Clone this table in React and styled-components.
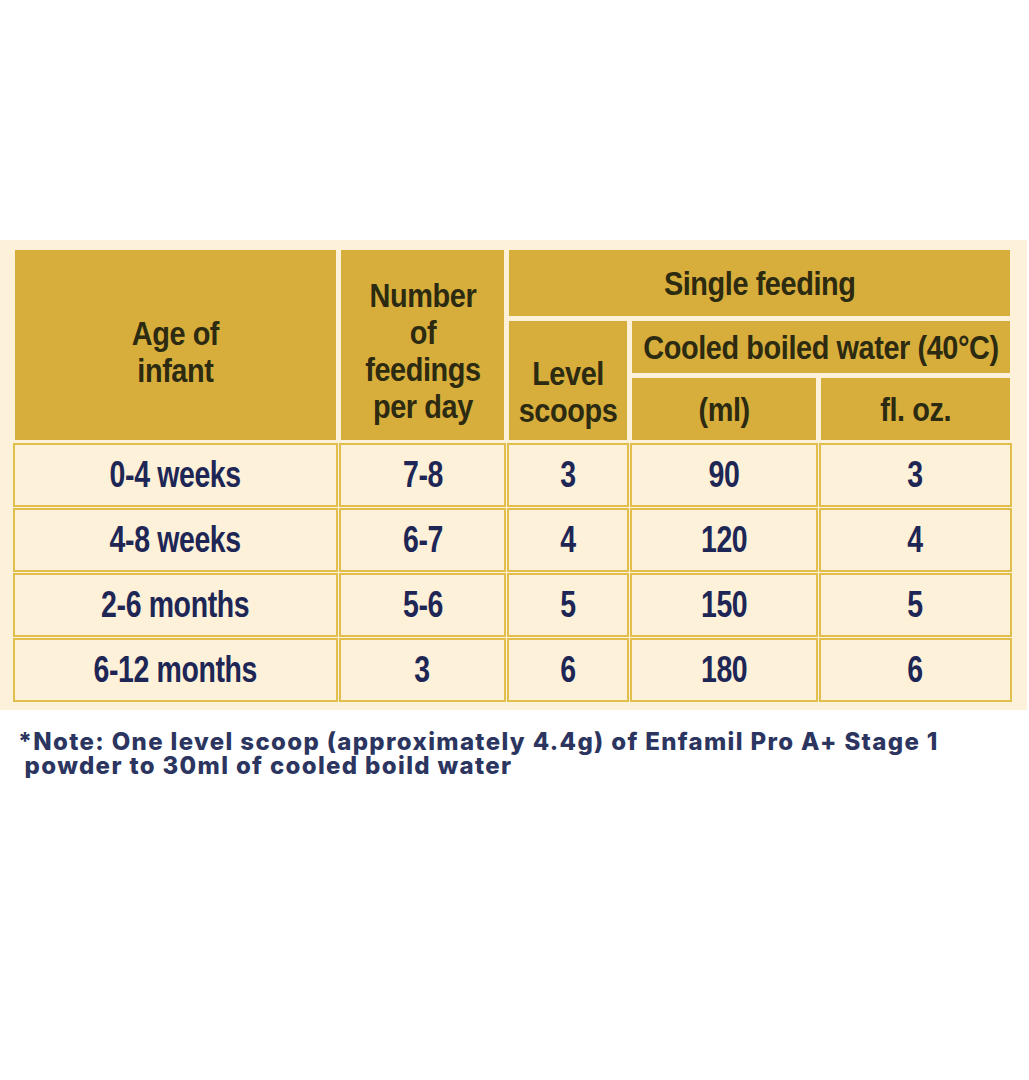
import React from "react";
import styled, { createGlobalStyle } from "styled-components";

const Global = createGlobalStyle`
  html, body { margin: 0; padding: 0; background: #ffffff; }
  body { width: 1029px; }
`;

const GOLD = "#d7ae3b";
const LINE = "#e2be4c";
const CREAM = "#fdf2d9";

const Page = styled.div`
  padding-top: 240px;
  width: 1029px;
`;

const Panel = styled.div`
  width: 1027px;
  box-sizing: border-box;
  background: ${CREAM};
  padding: 10px 17px 10px 15px;
`;

const Grid = styled.div`
  display: grid;
  grid-template-columns: 321px 163px 118px 184px 1fr;
  grid-template-rows: 66px 52px 62px repeat(4, 60px);
  gap: 5px;
  font-family: "Liberation Sans", Arial, sans-serif;
  font-weight: 700;
`;

const Head = styled.div`
  background: ${GOLD};
  color: #2c2a10;
  font-size: 34px;
  line-height: 37px;
  display: flex;
  align-items: center;
  justify-content: center;
  text-align: center;
  padding-top: ${(p) => p.$pt || 0}px;
  grid-column: ${(p) => p.$col};
  grid-row: ${(p) => p.$row};
`;

const Cell = styled.div`
  background: ${CREAM};
  box-shadow: 0 0 0 2px ${LINE};
  color: #1e2656;
  font-size: 37px;
  display: flex;
  align-items: center;
  justify-content: center;
`;

const Narrow = styled.span`
  display: inline-block;
  white-space: nowrap;
  transform: scaleX(${(p) => p.$sx || 0.85});
  letter-spacing: -0.5px;
`;

const Note = styled.p`
  margin: 20px 0 0 18px;
  font-family: "Inter", "Noto Sans", sans-serif;
  font-weight: 800;
  font-size: 24px;
  line-height: 24px;
  letter-spacing: 1.35px;
  color: #2b3560;
  white-space: pre;
`;

const rows = [
  ["0-4 weeks", "7-8", "3", "90", "3"],
  ["4-8 weeks", "6-7", "4", "120", "4"],
  ["2-6 months", "5-6", "5", "150", "5"],
  ["6-12 months", "3", "6", "180", "6"],
];

export default function App() {
  return (
    <Page>
      <Global />
      <Panel>
        <Grid>
          <Head $col="1" $row="1 / 4" $pt={14}><Narrow>Age of<br />infant</Narrow></Head>
          <Head $col="2" $row="1 / 4" $pt={12}><Narrow>Number<br />of<br />feedings<br />per day</Narrow></Head>
          <Head $col="3 / 6" $row="1"><Narrow>Single feeding</Narrow></Head>
          <Head $col="3" $row="2 / 4" $pt={22}><Narrow>Level<br />scoops</Narrow></Head>
          <Head $col="4 / 6" $row="2"><Narrow>Cooled boiled water (40°C)</Narrow></Head>
          <Head $col="4" $row="3"><Narrow>(ml)</Narrow></Head>
          <Head $col="5" $row="3"><Narrow>fl. oz.</Narrow></Head>
          {rows.map((r, i) =>
            r.map((v, j) => (
              <Cell key={i + "-" + j}><Narrow $sx={0.77}>{v}</Narrow></Cell>
            ))
          )}
        </Grid>
      </Panel>
      <Note>{"*Note: One level scoop (approximately 4.4g) of Enfamil Pro A+ Stage 1\n powder to 30ml of cooled boild water"}</Note>
    </Page>
  );
}
